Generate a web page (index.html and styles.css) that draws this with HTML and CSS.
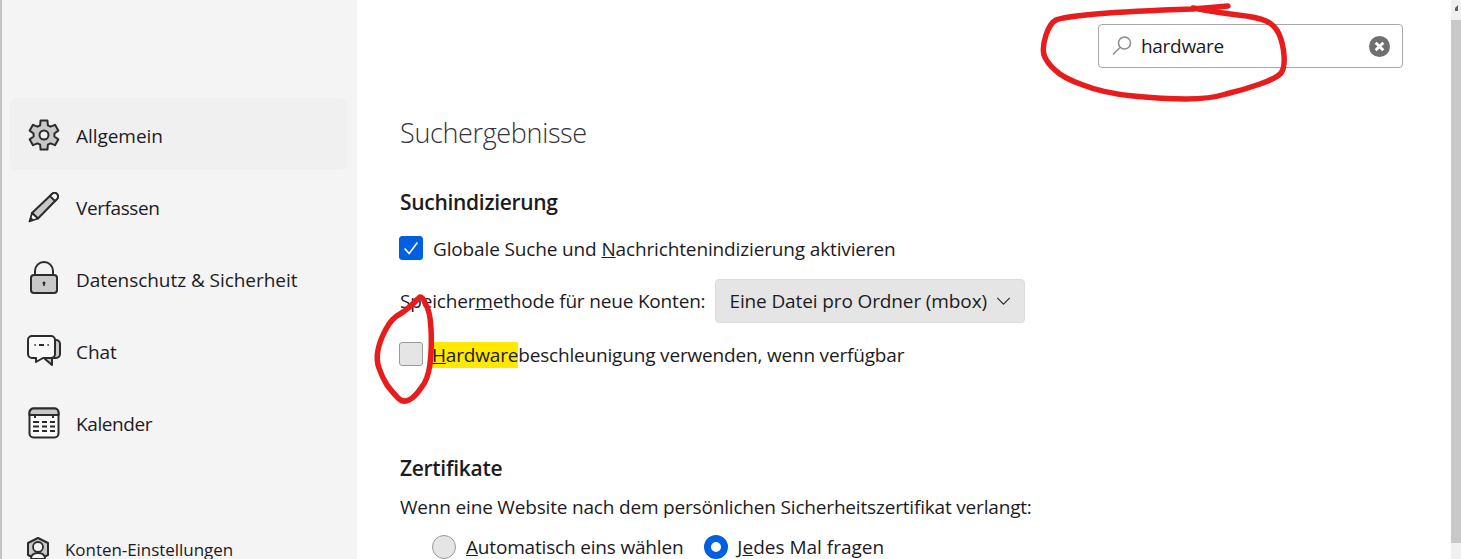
FILE: index.html
```html
<!DOCTYPE html>
<html lang="de">
<head>
    <meta charset="UTF-8">
    <title>Einstellungen</title>
    <link rel="stylesheet" href="styles.css">
</head>
<body>
    <div class="app">
        <nav class="sidebar">
            <ul class="nav-list">
                <li class="nav-item active">
                    <svg class="nav-icon" viewBox="0 0 32 32"><path class="ic" d="M12.600 1.400H19.400L19.900 6.300 22.500 7.700 27 5.800 30.300 11.600 26.400 14.500V17.500L30.300 20.400 27 26.200 22.500 24.300 19.900 25.700 19.400 30.600H12.600L12.100 25.700 9.500 24.300 5 26.200 1.700 20.400 5.600 17.500V14.500L1.700 11.600 5 5.800 9.500 7.700 12.100 6.300Z"/><circle cx="16" cy="16" r="4.500" fill="#f0f0f0" stroke="#2b2b2b" stroke-width="2"/></svg>
                    <span>Allgemein</span>
                </li>
                <li class="nav-item">
                    <svg class="nav-icon" viewBox="0 0 32 32"><path class="ic" d="M4 22L24 3a3.500 3.500 0 0 1 5 5L10 27.500Z"/><path d="M24 3a3.500 3.500 0 0 1 5 5l-2 2-5-5z" fill="#f9f9f9" stroke="#2b2b2b" stroke-width="1.800" stroke-linejoin="round"/><path d="M4 22l6 5.500-8.500 3z" fill="#f9f9f9" stroke="#2b2b2b" stroke-width="1.800" stroke-linejoin="round"/><path d="M1.500 30.500l1.200-4.500 3.300 3z" fill="#2b2b2b"/></svg>
                    <span class="tight">Verfassen</span>
                </li>
                <li class="nav-item">
                    <svg class="nav-icon" viewBox="0 0 32 32"><path class="ic-line" d="M7 12V8a9 9 0 0 1 18 0v4"/><rect class="ic" x="3" y="12" width="26" height="18" rx="3"/><circle cx="16" cy="20" r="1.500" fill="#2b2b2b"/><path d="M15.200 20h1.600v3h-1.600z" fill="#2b2b2b"/></svg>
                    <span>Datenschutz &amp; Sicherheit</span>
                </li>
                <li class="nav-item">
                    <svg class="nav-icon" viewBox="0 0 32 32"><path class="ic" d="M27 5h1a4 4 0 0 1 4 4v10a4 4 0 0 1-4 4h-4v7l-7-6z"/><path d="M4 1h19a4 4 0 0 1 4 4v14a4 4 0 0 1-4 4H15l-7 4v-4H4a4 4 0 0 1-4-4V5a4 4 0 0 1 4-4z" fill="#f9f9f9" stroke="#2b2b2b" stroke-width="2" stroke-linejoin="round"/><path class="ic-line" d="M6.500 10h1.200M11 10h5M19.500 10h1.200"/></svg>
                    <span>Chat</span>
                </li>
                <li class="nav-item">
                    <svg class="nav-icon" viewBox="0 0 32 32"><rect x="1.500" y="1.500" width="29" height="29" rx="4" fill="#f9f9f9" stroke="#2b2b2b" stroke-width="2"/><path class="ic" d="M1.500 8V5.500a4 4 0 0 1 4-4h21a4 4 0 0 1 4 4V8z"/><path class="ic-line" d="M7 8v3M25 8v3M5 15h6M14 15h5M22 15h5M5 19.500h6M14 19.500h5M22 19.500h5M5 24h6M14 24h5M22 24h5"/></svg>
                    <span class="tight">Kalender</span>
                </li>
            </ul>
            <div class="account-link">
                <svg class="account-icon" viewBox="0 0 24 24"><path class="ic" d="M12 1l10 5v12l-10 5-10-5V6z"/><circle cx="12" cy="10" r="5" fill="#f4f4f4" stroke="#2b2b2b" stroke-width="1.800"/><path d="M5 22c0-5 3-6 7-6s7 1 7 6z" fill="#f4f4f4" stroke="#2b2b2b" stroke-width="1.800"/></svg>
                <span>Konten-Einstellungen</span>
            </div>
        </nav>

        <main class="content">
            <div class="search-row">
                <div class="search-box">
                    <svg class="search-icon" viewBox="0 0 20 20"><circle cx="12.500" cy="7" r="6" fill="none" stroke="#8a8a8a" stroke-width="1.500"/><path d="M8 11.500l-7 7" stroke="#8a8a8a" stroke-width="1.500"/></svg>
                    <span class="search-text">hardware</span>
                    <svg class="clear-icon" viewBox="0 0 22 22"><circle cx="11" cy="11" r="11" fill="#6f6f6f"/><path d="M7 7l8 8M15 7l-8 8" stroke="#fff" stroke-width="3"/></svg>
                </div>
            </div>

            <h1 class="page-title">Suchergebnisse</h1>

            <h2 class="section-title">Suchindizierung</h2>
            <div class="row row-first">
                <span class="checkbox checked"><svg viewBox="0 0 24 24"><path d="M5 12.500l5 5.500 9-12" fill="none" stroke="#fff" stroke-width="1.800"/></svg></span>
                <span>Globale Suche und <u>N</u>achrichtenindizierung aktivieren</span>
            </div>
            <div class="row row-select">
                <span>Speicher<u>m</u>ethode für neue Konten:</span>
                <div class="select">
                    <span>Eine Datei pro Ordner (mbox)</span>
                    <svg class="chevron" viewBox="0 0 16 9"><path d="M1 1l7 7 7-7" fill="none" stroke="#2b2b2b" stroke-width="1.300"/></svg>
                </div>
            </div>
            <div class="row row-hw">
                <span class="checkbox"></span>
                <span><mark class="hit"><u>H</u>ardware</mark>beschleunigung verwenden, wenn verfügbar</span>
            </div>

            <h2 class="section-title cert-title">Zertifikate</h2>
            <p class="cert-text">Wenn eine Website nach dem persönlichen Sicherheitszertifikat verlangt:</p>
            <div class="radio-row">
                <span class="radio"></span>
                <span class="radio-label"><u>A</u>utomatisch eins wählen</span>
                <span class="radio selected"></span>
                <span class="radio-last">J<u>e</u>des Mal fragen</span>
            </div>
        </main>

        <div class="scrollbar">
            <svg class="scroll-arrow" viewBox="0 0 10 20"><path d="M7 5L4 8v3h3z" fill="#606060"/></svg>
            <div class="scroll-thumb"></div>
        </div>
    </div>

    <!-- rote Markierungen -->
    <svg class="scribble" viewBox="0 0 1461 559">
        <path d="M1228 6L1193 9Q1130 11 1096 14Q1063 17 1056 20Q1050 23 1046 35Q1042 47 1044 55Q1047 63 1055 70Q1063 78 1083 85Q1103 93 1133 96Q1163 99 1186 99Q1210 99 1226 94Q1243 90 1260 84Q1277 78 1281 73Q1285 68 1284 55Q1283 43 1279 34Q1275 25 1266 21Q1257 17 1238 15Q1220 13 1193 8"/>
        <path d="M420 297Q407 310 400 314Q392 318 386 329Q380 340 378 350Q376 360 379 368Q382 377 387 385Q393 393 398 398Q403 403 409 400Q415 397 421 388Q428 380 430 364Q432 347 431 328Q430 310 425 303Q423 297 420 297Z"/>
    </svg>
</body>
</html>
```
FILE: styles.css
```css
* {
    box-sizing: border-box;
}
html, body {
    height: 100%;
}
body {
    margin: 0;
    overflow: hidden;
    font-family: "Open Sans", "Noto Sans", sans-serif;
    font-size: 19px;
    color: #1c1b22;
    background: #fff;
}
.app {
    display: flex;
    height: 559px;
    overflow: hidden;
}
.sidebar {
    position: relative;
    flex: 0 0 357px;
    padding: 98px 10px 0 8px;
    background: #f4f4f4;
    border-left: 2px solid #c4c4c4;
}
.nav-list {
    list-style: none;
    margin: 0;
    padding: 0;
    display: flex;
    flex-direction: column;
}
.nav-item {
    display: flex;
    align-items: center;
    height: 72px;
    padding: 2px 0 0 18px;
    letter-spacing: -0.05px;
    border-radius: 6px;
}
.nav-item span {
    padding-top: 2px;
}
.nav-item .tight {
    letter-spacing: -0.4px;
}
.nav-item.active {
    background: #f0f0f0;
}
.nav-icon {
    flex: 0 0 32px;
    width: 32px;
    height: 32px;
    margin-right: 16px;
    overflow: visible;
}
.ic {
    fill: #c8c8c8;
    stroke: #2b2b2b;
    stroke-width: 2;
    stroke-linejoin: round;
}
.ic-line {
    fill: none;
    stroke: #2b2b2b;
    stroke-width: 2;
}
.account-link {
    position: absolute;
    left: 24px;
    top: 536px;
    display: flex;
    align-items: center;
    font-size: 17px;
    letter-spacing: -0.05px;
}
.account-link span {
    padding-top: 2px;
}
.account-icon {
    width: 24px;
    height: 24px;
    margin-right: 15px;
}
.content {
    flex: 1;
    padding: 0 48px 0 42px;
}
.search-row {
    display: flex;
    justify-content: flex-end;
    padding-top: 24px;
}
.search-box {
    display: flex;
    align-items: center;
    width: 305px;
    height: 44px;
    padding: 0 12px 0 13px;
    border: 1px solid #a8a8a8;
    border-radius: 4px;
}
.search-icon {
    width: 20px;
    height: 20px;
    margin-right: 9px;
}
.search-text {
    flex: 1;
    letter-spacing: -0.3px;
}
.clear-icon {
    width: 21px;
    height: 21px;
}
.page-title {
    margin: 46px 0 0;
    padding-left: 1px;
    font-size: 27px;
    font-weight: 300;
    line-height: 38px;
    letter-spacing: -0.35px;
    color: #33323a;
}
.section-title {
    margin: 36px 0 0;
    padding-left: 1px;
    font-size: 21px;
    font-weight: 600;
    line-height: 28px;
    letter-spacing: -0.3px;
}
.row {
    display: flex;
    align-items: center;
    letter-spacing: -0.18px;
}
.row-first {
    margin-top: 20px;
    letter-spacing: -0.14px;
}
.row-first .checkbox {
    margin-right: 10px;
}
.row-select {
    margin-top: 17px;
    padding-left: 1px;
}
.row-hw {
    margin-top: 19px;
}
.checkbox {
    flex: 0 0 24px;
    width: 24px;
    height: 24px;
    margin: 0 9px 2px 0;
    background: #e5e5e5;
    border: 1px solid #9a9a9a;
    border-radius: 3px;
}
.checkbox.checked {
    background: #0060df;
    border-color: #0060df;
}
.checkbox svg {
    display: block;
}
.select {
    display: flex;
    align-items: center;
    justify-content: space-between;
    width: 310px;
    height: 44px;
    margin-left: 10px;
    padding: 0 13px 0 13px;
    background: #e5e5e5;
    border: 1px solid #dcdcdc;
    border-radius: 4px;
    letter-spacing: -0.12px;
}
.chevron {
    width: 15px;
    height: 8px;
}
.hit {
    background: #ffe900;
    color: inherit;
}
.cert-title {
    margin-top: 86px;
}
.cert-text {
    margin: 12px 0 0;
    padding-left: 1px;
    line-height: 26px;
    letter-spacing: -0.18px;
}
.radio-row {
    display: flex;
    align-items: center;
    margin-top: 14px;
    padding-left: 33px;
    letter-spacing: -0.18px;
}
.radio {
    flex: 0 0 24px;
    width: 24px;
    height: 24px;
    margin-right: 10px;
    border-radius: 50%;
    background: #e5e5e5;
    border: 1px solid #9a9a9a;
}
.radio.selected {
    background: #fff;
    border: 7px solid #0060df;
    margin-right: 9px;
}
.radio-label {
    margin-right: 21px;
}
.radio-last {
    letter-spacing: 0;
}
.scrollbar {
    flex: 0 0 10px;
    background: #f0f0f0;
}
.scroll-arrow {
    display: block;
    width: 10px;
    height: 20px;
}
.scroll-thumb {
    height: 523px;
    background: #c8c8c8;
}
.scribble {
    position: absolute;
    left: 0;
    top: 0;
    width: 1461px;
    height: 559px;
    pointer-events: none;
}
.scribble path {
    fill: none;
    stroke: #e81c1c;
    stroke-width: 5.5;
    stroke-linecap: round;
    stroke-linejoin: round;
}
```
